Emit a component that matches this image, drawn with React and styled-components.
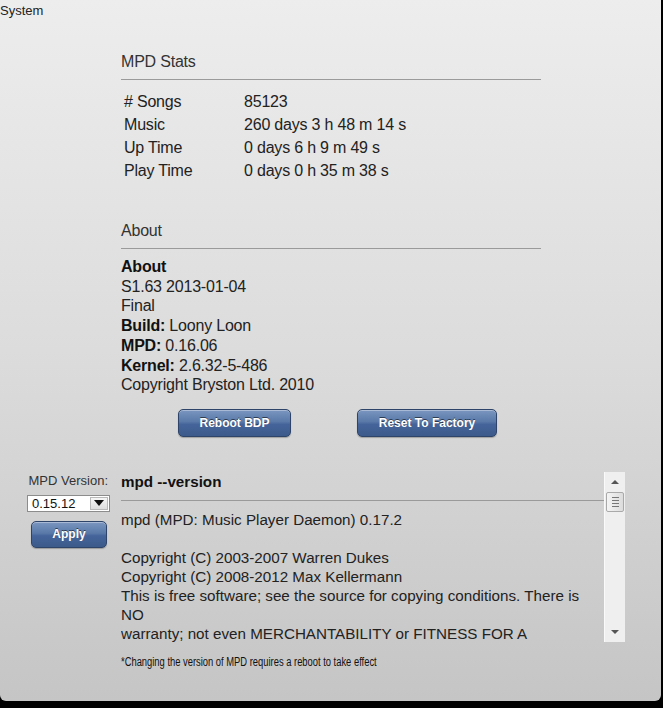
import React from "react";
import styled, { createGlobalStyle } from "styled-components";

const GlobalStyle = createGlobalStyle`
  html, body {
    margin: 0;
    padding: 0;
    background: #000;
  }
  body {
    font-family: "Liberation Sans", Arial, sans-serif;
    color: #222;
  }
`;

const Panel = styled.div`
  width: 661px;
  height: 701px;
  background: linear-gradient(to bottom, #ededed 0%, #dcdcdc 50%, #c5c5c5 100%);
  border-radius: 0 0 6px 6px;
  box-sizing: border-box;
  overflow: hidden;
`;

const Title = styled.div`
  font-size: 13px;
  line-height: 16px;
  padding-top: 3px;
  color: #222;
`;

const Grid = styled.div`
  display: grid;
  grid-template-columns: 121px 504px;
`;

const Column = styled.div`
  grid-column: 2;
  width: 420px;
`;

const SectionHead = styled.div`
  font-size: 16px;
  line-height: 19px;
  letter-spacing: -0.2px;
  color: #333;
  padding-bottom: 8px;
  border-bottom: 1px solid #9a9a9a;
  margin-top: ${(p) => p.$top}px;
`;

const StatsTable = styled.div`
  display: grid;
  grid-template-columns: 120px 1fr;
  margin-top: 10px;
  padding-left: 3px;
  font-size: 16px;
  line-height: 23px;
  letter-spacing: -0.2px;
  color: #222;
`;

const AboutBlock = styled.div`
  margin-top: 8px;
  font-size: 16px;
  line-height: 19.7px;
  letter-spacing: -0.2px;
  color: #222;
  b {
    color: #111;
  }
`;

const ButtonRow = styled.div`
  display: flex;
  gap: 66px;
  margin: 14px 0 0 57px;
`;

const Button = styled.button`
  width: ${(p) => p.$w}px;
  height: ${(p) => p.$h || 28}px;
  padding: 0;
  border: 1px solid #2e4468;
  border-radius: 5px;
  background: linear-gradient(to bottom, #7a96c0 0%, #5a79a8 45%, #45649a 55%, #3c5a8a 100%);
  box-shadow: inset 0 1px 0 rgba(255, 255, 255, 0.35), 0 1px 1px rgba(0, 0, 0, 0.25);
  color: #fff;
  font-family: "Liberation Sans", Arial, sans-serif;
  font-weight: bold;
  font-size: 12px;
  text-shadow: 0 -1px 0 rgba(0, 0, 0, 0.55);
  cursor: pointer;
`;

const Lower = styled.div`
  display: grid;
  grid-template-columns: 121px 504px;
  margin-top: 35px;
`;

const Side = styled.div`
  padding-left: 27px;
  padding-top: 1px;
  display: flex;
  flex-direction: column;
  align-items: flex-start;
`;

const SideLabel = styled.div`
  width: 81px;
  text-align: right;
  font-size: 13px;
  line-height: 15px;
  color: #333;
  white-space: nowrap;
`;

const Select = styled.div`
  margin-top: 7px;
  width: 83px;
  height: 17px;
  box-sizing: border-box;
  border: 1px solid #8c8c8c;
  background: #fff;
  display: flex;
  align-items: center;
  justify-content: space-between;
  font-size: 13px;
  color: #111;
  padding-left: 4px;
`;

const DropBtn = styled.span`
  width: 18px;
  height: 13px;
  margin-right: 1px;
  box-sizing: border-box;
  border: 1px solid #b9b9b9;
  background: linear-gradient(#f6f6f6, #dedede);
  display: flex;
  align-items: center;
  justify-content: center;
  &::after {
    content: "";
    border-left: 5px solid transparent;
    border-right: 5px solid transparent;
    border-top: 6px solid #111;
  }
`;

const ApplyWrap = styled.div`
  margin: 9px 0 0 4px;
`;

const Box = styled.div`
  display: flex;
  height: 170px;
`;

const BoxContent = styled.div`
  width: 483px;
  overflow: hidden;
  font-size: 15.2px;
  line-height: 19px;
  color: #222;
`;

const BoxHead = styled.div`
  font-weight: bold;
  color: #111;
  padding-bottom: 9px;
  border-bottom: 1px solid #9a9a9a;
  margin-bottom: 9px;
`;

const Pre = styled.div`
  white-space: pre-wrap;
  padding-right: 22px;
`;

const Scrollbar = styled.div`
  width: 21px;
  box-sizing: border-box;
  background: #efefef;
  border-left: 1px solid #fafafa;
  display: flex;
  flex-direction: column;
  align-items: center;
`;

const Arrow = styled.div`
  height: 20px;
  display: flex;
  align-items: center;
  justify-content: center;
  &::after {
    content: "";
    border-left: 4px solid transparent;
    border-right: 4px solid transparent;
    ${(p) => (p.$up ? "border-bottom: 4px solid #555;" : "border-top: 4px solid #555;")}
  }
`;

const Thumb = styled.div`
  width: 18px;
  height: 20px;
  box-sizing: border-box;
  border: 1px solid #a9a9a9;
  border-radius: 2px;
  background: linear-gradient(to right, #f4f4f4, #dcdcdc);
  display: flex;
  flex-direction: column;
  align-items: center;
  justify-content: center;
  gap: 2px;
  span {
    width: 7px;
    height: 1px;
    background: #777;
  }
`;

const Track = styled.div`
  flex: 1;
`;

const Note = styled.div`
  grid-column: 2;
  margin-top: 13px;
  font-size: 12.5px;
  line-height: 14px;
  color: #111;
  transform: scaleX(0.75);
  transform-origin: left center;
  white-space: nowrap;
`;

const stats = [
  ["# Songs", "85123"],
  ["Music", "260 days 3 h 48 m 14 s"],
  ["Up Time", "0 days 6 h 9 m 49 s"],
  ["Play Time", "0 days 0 h 35 m 38 s"],
];

const versionText = `mpd (MPD: Music Player Daemon) 0.17.2

Copyright (C) 2003-2007 Warren Dukes
Copyright (C) 2008-2012 Max Kellermann
This is free software; see the source for copying conditions. There is NO
warranty; not even MERCHANTABILITY or FITNESS FOR A`;

export default function App() {
  return (
    <>
      <GlobalStyle />
      <Panel>
        <Title>System</Title>
        <Grid>
          <Column>
            <SectionHead $top={33}>MPD Stats</SectionHead>
            <StatsTable>
              {stats.map(([k, v]) => (
                <React.Fragment key={k}>
                  <span>{k}</span>
                  <span>{v}</span>
                </React.Fragment>
              ))}
            </StatsTable>
            <SectionHead $top={39}>About</SectionHead>
            <AboutBlock>
              <b>About</b>
              <br />
              S1.63 2013-01-04
              <br />
              Final
              <br />
              <b>Build:</b> Loony Loon
              <br />
              <b>MPD:</b> 0.16.06
              <br />
              <b>Kernel:</b> 2.6.32-5-486
              <br />
              Copyright Bryston Ltd. 2010
            </AboutBlock>
            <ButtonRow>
              <Button $w={113}>Reboot BDP</Button>
              <Button $w={140}>Reset To Factory</Button>
            </ButtonRow>
          </Column>
        </Grid>
        <Lower>
          <Side>
            <SideLabel>MPD Version:</SideLabel>
            <Select>
              0.15.12
              <DropBtn />
            </Select>
            <ApplyWrap>
              <Button $w={76} $h={27}>Apply</Button>
            </ApplyWrap>
          </Side>
          <Box>
            <BoxContent>
              <BoxHead>mpd --version</BoxHead>
              <Pre>{versionText}</Pre>
            </BoxContent>
            <Scrollbar>
              <Arrow $up />
              <Thumb>
                <span />
                <span />
                <span />
                <span />
              </Thumb>
              <Track />
              <Arrow />
            </Scrollbar>
          </Box>
          <Note>*Changing the version of MPD requires a reboot to take effect</Note>
        </Lower>
      </Panel>
    </>
  );
}
